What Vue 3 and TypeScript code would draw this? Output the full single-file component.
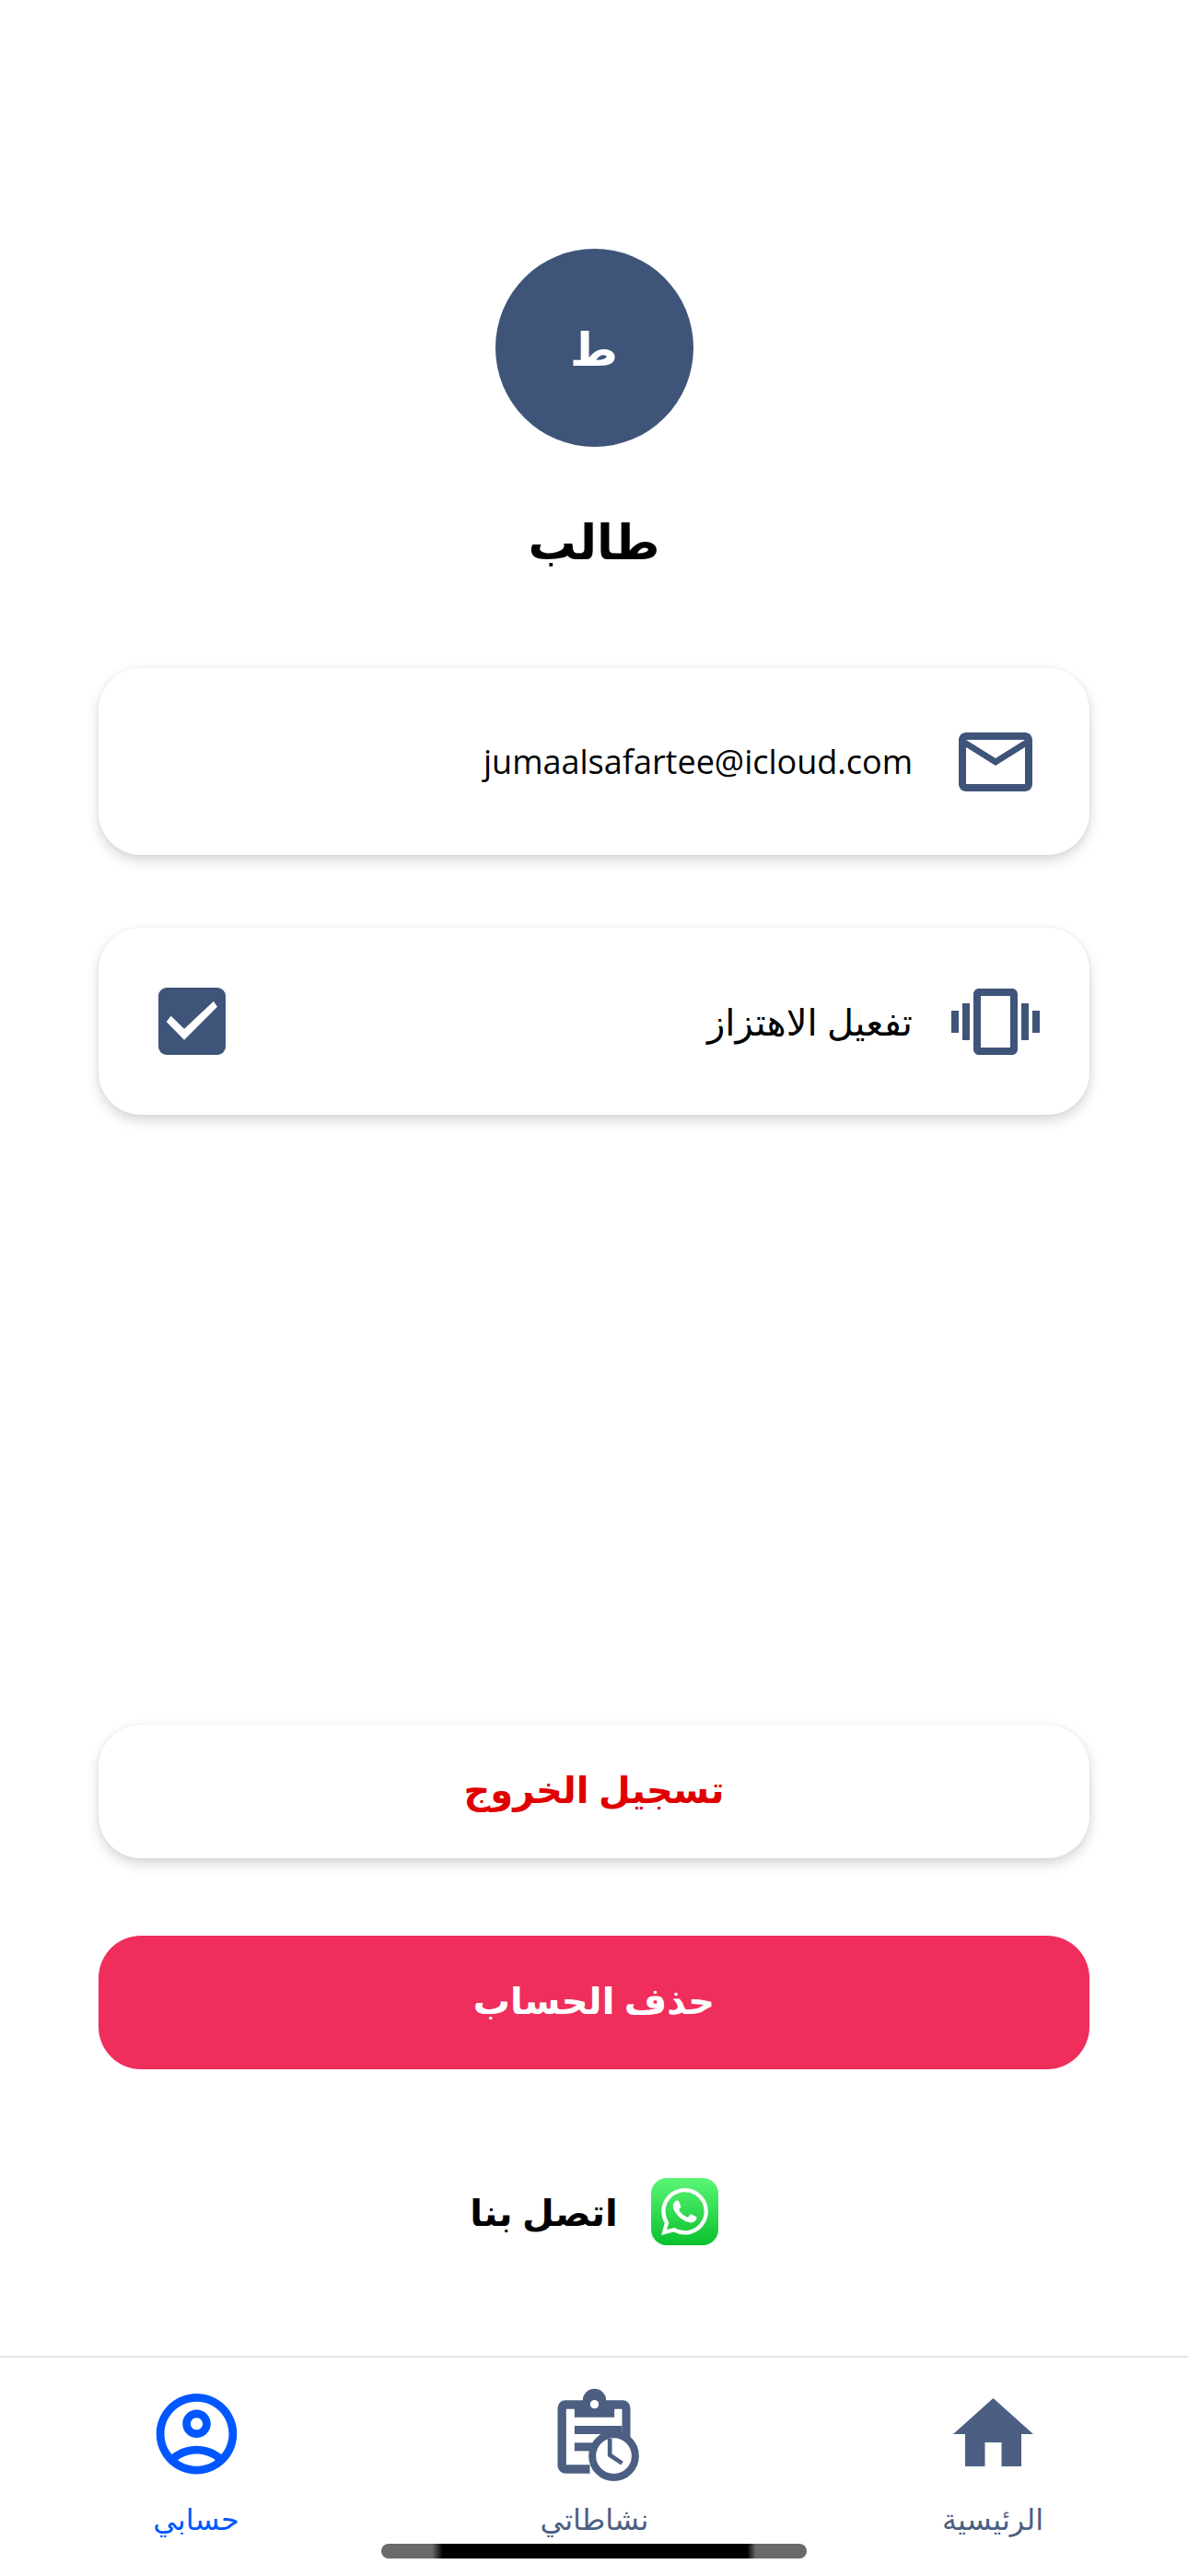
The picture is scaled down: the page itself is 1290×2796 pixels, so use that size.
<script setup lang="ts">
const tabs = [
  { key: 'home', label: 'الرئيسية', active: false },
  { key: 'activity', label: 'نشاطاتي', active: false },
  { key: 'profile', label: 'حسابي', active: true },
]
</script>

<template>
  <div class="page" dir="rtl">
    <main class="content">
      <div class="avatar">ط</div>
      <h1 class="name">طالب</h1>

      <section class="card first">
        <svg class="row-icon" viewBox="0 0 24 24"><path d="M20 4H4c-1.1 0-1.99.9-1.99 2L2 18c0 1.1.9 2 2 2h16c1.1 0 2-.9 2-2V6c0-1.1-.9-2-2-2zm0 14H4V8l8 5 8-5v10zm-8-7L4 6h16l-8 5z" /></svg>
        <span class="row-text email" dir="ltr">jumaalsafartee@icloud.com</span>
      </section>

      <section class="card second">
        <svg class="row-icon" viewBox="0 0 24 24"><path d="M0 15h2V9H0v6zm3 2h2V7H3v10zm19-8v6h2V9h-2zm-3 8h2V7h-2v10zM16.5 3h-9C6.67 3 6 3.67 6 4.5v15c0 .83.67 1.5 1.5 1.5h9c.83 0 1.5-.67 1.5-1.5v-15c0-.83-.67-1.5-1.5-1.5zM16 19H8V5h8v14z" /></svg>
        <span class="row-text">تفعيل الاهتزاز</span>
        <span class="check">
          <svg viewBox="0 0 73 73"><path d="M8.7 37 L13.7 30.7 L28 44.7 L60 14.7 L64 20.7 L28 56.7 Z" fill="#fff" /></svg>
        </span>
      </section>

      <button class="btn logout">تسجيل الخروج</button>
      <button class="btn delete">حذف الحساب</button>

      <div class="contact">
        <span class="wa">
          <svg viewBox="0 0 24 24"><path fill="#fff" d="M17.472 14.382c-.297-.149-1.758-.867-2.03-.967-.273-.099-.471-.148-.67.15-.197.297-.767.966-.94 1.164-.173.199-.347.223-.644.075-.297-.15-1.255-.463-2.39-1.475-.883-.788-1.48-1.761-1.653-2.059-.173-.297-.018-.458.13-.606.134-.133.298-.347.446-.52.149-.174.198-.298.298-.497.099-.198.05-.371-.025-.52-.075-.149-.669-1.612-.916-2.207-.242-.579-.487-.5-.669-.51-.173-.008-.371-.01-.57-.01-.198 0-.52.074-.792.372-.272.297-1.04 1.016-1.04 2.479 0 1.462 1.065 2.875 1.213 3.074.149.198 2.096 3.2 5.077 4.487.709.306 1.262.489 1.694.625.712.227 1.36.195 1.871.118.571-.085 1.758-.719 2.006-1.413.248-.694.248-1.289.173-1.413-.074-.124-.272-.198-.57-.347m-5.421 7.403h-.004a9.87 9.87 0 01-5.031-1.378l-.361-.214-3.741.982.998-3.648-.235-.374a9.86 9.86 0 01-1.51-5.26c.001-5.45 4.436-9.884 9.888-9.884 2.64 0 5.122 1.03 6.988 2.898a9.825 9.825 0 012.893 6.994c-.003 5.45-4.437 9.884-9.885 9.884m8.413-18.297A11.815 11.815 0 0012.05 0C5.495 0 .16 5.335.157 11.892c0 2.096.547 4.142 1.588 5.945L.057 24l6.305-1.654a11.882 11.882 0 005.683 1.448h.005c6.554 0 11.89-5.335 11.893-11.893a11.821 11.821 0 00-3.48-8.413z" /></svg>
        </span>
        <span class="contact-text">اتصل بنا</span>
      </div>
    </main>

    <nav class="tabs">
      <div v-for="t in tabs" :key="t.key" class="tab" :class="{ active: t.active }">
        <svg v-if="t.key === 'home'" class="tab-icon" viewBox="0 0 105 105">
          <path d="M52.5 9 L96 48 H83 V83 H61.5 V57 H43.5 V83 H22 V48 H9 Z" />
        </svg>
        <svg v-else-if="t.key === 'activity'" class="tab-icon" viewBox="97.5 63 315 315">
          <path fill-rule="evenodd" d="M160 97 H217 A38 38 0 0 1 293 97 H347 A25 25 0 0 1 372 122 V225 H345 V125 H320 V152 H190 V125 H163 V307 H240 V335 H160 A25 25 0 0 1 135 310 V122 A25 25 0 0 1 160 97 Z M255 96 A14 14 0 1 0 255 124 A14 14 0 1 0 255 96 Z" />
          <rect x="190" y="180" width="155" height="27" />
          <rect x="190" y="235" width="60" height="27" />
          <circle cx="318" cy="278" r="70" fill="#fff" stroke="#4c5f82" stroke-width="24" />
          <path d="M305 222 V275 L345 302" fill="none" stroke="#4c5f82" stroke-width="14" />
        </svg>
        <svg v-else class="tab-icon" viewBox="0 1.1 24 24">
          <path d="M12 2C6.48 2 2 6.48 2 12s4.48 10 10 10 10-4.48 10-10S17.52 2 12 2zM7.35 18.5C8.66 17.56 10.26 17 12 17s3.34.56 4.65 1.5c-1.31.94-2.91 1.5-4.65 1.5s-3.34-.56-4.65-1.5zm10.79-1.38C16.45 15.8 14.32 15 12 15s-4.45.8-6.14 2.12C4.7 15.73 4 13.95 4 12c0-4.42 3.58-8 8-8s8 3.58 8 8c0 1.95-.7 3.73-1.86 5.12z" />
          <path d="M12 6c-1.93 0-3.5 1.57-3.5 3.5S10.07 13 12 13s3.5-1.57 3.5-3.5S13.93 6 12 6zm0 5c-.83 0-1.5-.67-1.5-1.5S11.17 8 12 8s1.5.67 1.5 1.5S12.83 11 12 11z" />
        </svg>
        <span class="tab-label">{{ t.label }}</span>
      </div>
    </nav>
    <div class="home-indicator"></div>
  </div>
</template>

<style>
html, body { margin: 0; background: #fff; }
</style>

<style scoped>
.page {
  position: relative;
  width: 1290px;
  height: 2796px;
  background: #fff;
  display: flex;
  flex-direction: column;
  overflow: hidden;
  font-family: "Noto Sans", "DejaVu Sans", sans-serif;
  color: #000;
}
.content {
  flex: 1;
  padding: 270px 107px 0;
  display: flex;
  flex-direction: column;
  align-items: stretch;
}
.avatar {
  width: 215px;
  height: 215px;
  border-radius: 50%;
  align-self: center;
  background: #3f5479;
  color: #fff;
  font-size: 50px;
  font-weight: 700;
  display: flex;
  align-items: center;
  justify-content: center;
}
.name {
  margin: 70px 0 0;
  height: 64px;
  line-height: 64px;
  text-align: center;
  font-size: 52px;
  font-weight: 700;
}
.card {
  height: 203px;
  border-radius: 46px;
  background: #fff;
  box-shadow: 0 6px 14px rgba(0, 0, 0, .16), 0 0 5px rgba(0, 0, 0, .05);
  display: flex;
  align-items: center;
  padding: 0 54px 0 65px;
}
.first { margin-top: 106px; }
.second { margin-top: 79px; }
.row-icon {
  width: 96px;
  height: 96px;
  flex: none;
  fill: #3f5479;
}
.row-text {
  margin-right: 42px;
  font-size: 40px;
  font-family: "Open Sans", "DejaVu Sans", sans-serif;
}
.row-text.email { font-size: 36px; }
.check {
  width: 73px;
  height: 73px;
  margin-right: auto;
  border-radius: 9px;
  background: #3f5479;
  display: block;
}
.check svg { display: block; width: 73px; height: 73px; }
.btn {
  display: block;
  width: 100%;
  border: 0;
  border-radius: 46px;
  font-family: inherit;
  font-size: 40px;
  font-weight: 700;
  padding: 0 0 6px;
}
.logout {
  margin-top: 662px;
  height: 145px;
  background: #fff;
  color: #e00000;
  box-shadow: 0 6px 14px rgba(0, 0, 0, .16), 0 0 5px rgba(0, 0, 0, .05);
}
.delete {
  margin-top: 84px;
  height: 145px;
  background: #ef2e5c;
  color: #fff;
}
.contact {
  margin-top: 118px;
  height: 73px;
  display: flex;
  align-items: center;
  justify-content: center;
  gap: 36px;
}
.wa {
  width: 73px;
  height: 73px;
  border-radius: 17px;
  background: linear-gradient(#5bf675, #0ac12e);
  display: flex;
  align-items: center;
  justify-content: center;
}
.wa svg { width: 51px; height: 51px; }
.contact-text {
  font-size: 40px;
  font-weight: 700;
}
.tabs {
  flex: none;
  height: 239px;
  box-sizing: border-box;
  border-top: 2px solid #e6e6e6;
  padding: 0 147px 0 148px;
  display: flex;
  justify-content: space-between;
  align-items: flex-start;
}
.tab {
  width: 130px;
  display: flex;
  flex-direction: column;
  align-items: center;
  color: #4c5f82;
}
.tab.active { color: #0057ff; }
.tab-icon {
  width: 105px;
  height: 105px;
  margin-top: 35px;
  fill: currentColor;
  overflow: visible;
}
.tab-label {
  margin-top: 10px;
  font-size: 32px;
  line-height: 50px;
  white-space: nowrap;
}
.home-indicator {
  position: absolute;
  left: 414px;
  top: 2761px;
  width: 462px;
  height: 16px;
  border-radius: 8px;
  background: linear-gradient(90deg, #6a6a6a 0, #6a6a6a 12%, #000 14.5%, #000 86%, #6a6a6a 88%, #6a6a6a 100%);
}
</style>
